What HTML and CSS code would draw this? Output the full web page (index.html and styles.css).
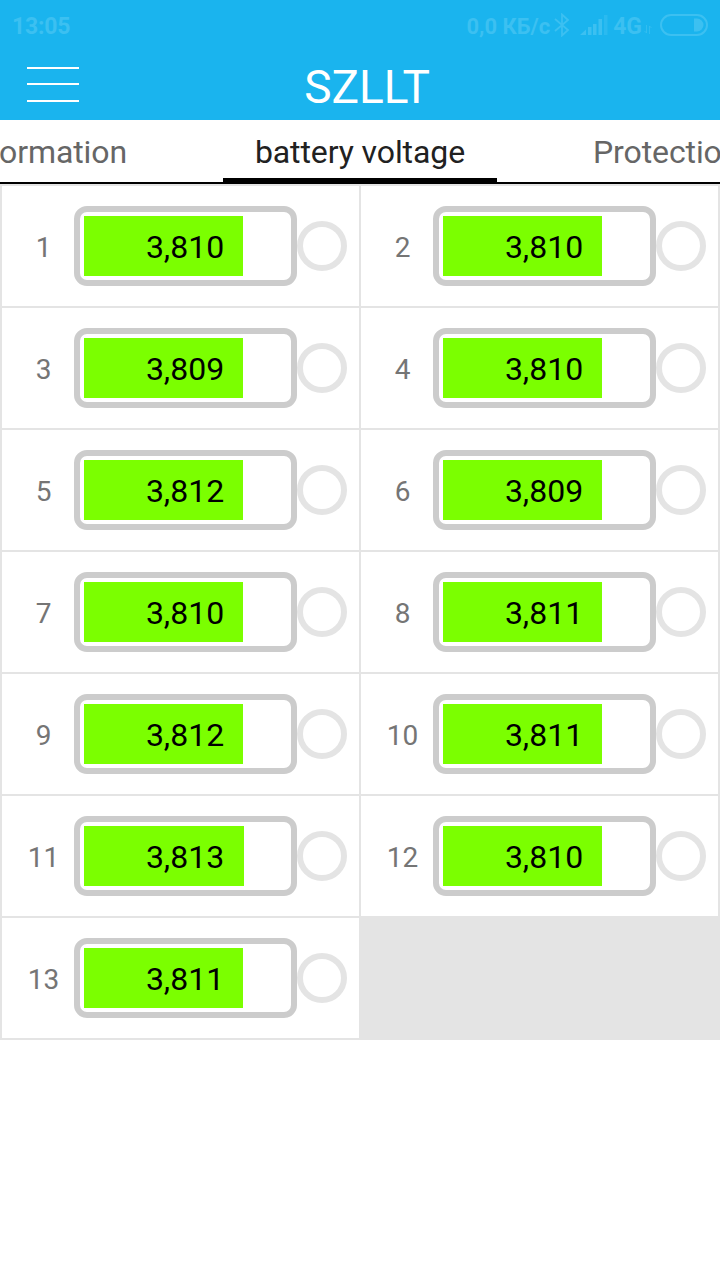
FILE: index.html
```html
<!DOCTYPE html>
<html lang="en">
<head>
    <meta charset="UTF-8">
    <meta name="viewport" content="width=device-width, initial-scale=1.0">
    <title>SZLLT</title>
    <link rel="stylesheet" href="styles.css">
</head>
<body>
    <header class="header">
        <div class="status-bar">
            <span class="clock">13:05</span>
            <span class="speed">0,0 КБ/с</span>
            <svg class="bluetooth" width="16" height="24" viewBox="0 0 16 24">
                <path d="M1 6 L14 17 L8 22.500 V1.500 L14 7 L1 18" fill="none" stroke="currentColor" stroke-width="1.800"/>
            </svg>
            <svg class="signal" width="28" height="20" viewBox="0 0 28 20">
                <path d="M0 20 L6 14.500 V20Z M8 12h3.500v8H8z M13 9h3.500v11H13z M18.500 4h3.500v16h-3.500z" fill="currentColor"/>
                <path d="M24 0h3.500v20H24z" fill="currentColor" opacity="0.5"/>
            </svg>
            <span class="network">4G</span>
            <svg class="arrows" width="8" height="9" viewBox="0 0 8 9">
                <path d="M2.500 0V8L0.500 6 M5.500 9V1L7.500 3" fill="none" stroke="currentColor" opacity="0.7"/>
            </svg>
            <svg class="battery-icon" width="48" height="22" viewBox="0 0 48 22">
                <rect x="1" y="1" width="46" height="20" rx="10" fill="none" stroke="currentColor" stroke-width="2"/>
                <path d="M34 4.500h3a6.500 6.500 0 0 1 0 13h-3z" fill="currentColor"/>
            </svg>
        </div>
        <div class="title-bar">
            <button class="menu-button" aria-label="Menu">
                <svg width="52" height="36" viewBox="0 0 52 36">
                    <path d="M0 1h52v2H0z M0 17h52v2H0z M0 34h52v2H0z" fill="#fff"/>
                </svg>
            </button>
            <h1>SZLLT</h1>
        </div>
    </header>

    <nav class="tabs">
        <a class="tab tab-left">Information</a>
        <a class="tab active">battery voltage</a>
        <a class="tab tab-right">Protection</a>
    </nav>

    <main class="cells" id="cells"></main>

    <script>
        const voltages = [
            3.810, 3.810, 3.809, 3.810, 3.812, 3.809, 3.810,
            3.811, 3.812, 3.811, 3.813, 3.810, 3.811
        ];

        const emptyVoltage = 3;
        const fullVoltage = 4.034;

        function renderCells() {
            const container = document.getElementById('cells');
            voltages.forEach((voltage, index) => {
                const width = Math.round((voltage - emptyVoltage) / (fullVoltage - emptyVoltage) * 203);
                const cell = document.createElement('div');
                cell.className = 'cell';
                cell.innerHTML = `
                    <span class="number">${index + 1}</span>
                    <div class="battery">
                        <div class="level" style="width: ${width}px"></div>
                        <span class="value">${voltage.toFixed(3).replace('.', ',')}</span>
                    </div>
                    <span class="balance"></span>
                `;
                container.appendChild(cell);
            });
        }

        renderCells();
    </script>
</body>
</html>
```
FILE: styles.css
```css
* {
    box-sizing: border-box;
}
body {
    font-family: Roboto, sans-serif;
    background-color: #fff;
    margin: 0;
    overflow-x: hidden;
}

/* Header */
.header {
    background-color: #1ab4ee;
    height: 120px;
}
.status-bar {
    display: flex;
    align-items: center;
    height: 50px;
    padding: 0 12px 0 12px;
    color: #3cc0f1;
    font-size: 23px;
    font-weight: 700;
    white-space: nowrap;
}
.clock {
    margin-right: auto;
    padding-top: 2px;
    letter-spacing: -0.2px;
}
.speed,
.network {
    padding-top: 2px;
}
.speed {
    font-size: 22px;
}
.bluetooth {
    margin: 0 10px 0 4px;
}
.signal {
    margin: 0 5px 0 0;
}
.arrows {
    margin: 9px 8px 0 2px;
}
.title-bar {
    display: flex;
    height: 70px;
    padding-left: 27px;
}
.menu-button {
    width: 52px;
    height: 36px;
    margin: 16px 0 0;
    padding: 0;
    border: none;
    background: none;
}
.menu-button svg {
    display: block;
}
.title-bar h1 {
    flex: 1;
    margin: 0;
    padding-right: 65px;
    color: #fff;
    font-size: 46px;
    font-weight: 400;
    line-height: 74px;
    text-align: center;
}

/* Tabs */
.tabs {
    display: grid;
    grid-template-columns: 223px 274px 223px;
    height: 64px;
    overflow: hidden;
    border-bottom: 2px solid #000;
}
.tab {
    display: flex;
    height: 62px;
    color: #666;
    font-size: 32px;
    line-height: 64px;
    letter-spacing: -0.1px;
    white-space: nowrap;
}
.tab-left {
    justify-content: flex-end;
    padding-right: 96px;
}
.tab-right {
    padding-left: 96px;
}
.tab.active {
    justify-content: center;
    border-bottom: 4px solid #000;
    color: #212121;
}

/* Battery cells */
.cells {
    display: grid;
    grid-template-columns: 1fr 1fr;
    gap: 2px;
    padding: 2px;
    background-color: #e4e4e4;
}
.cell {
    display: flex;
    align-items: center;
    height: 120px;
    padding-left: 12px;
    background-color: #fff;
}
.number {
    width: 60px;
    padding: 2px 1px 0 0;
    color: #757575;
    font-size: 28px;
    text-align: center;
}
.battery {
    display: grid;
    grid-template-rows: 60px;
    width: 223px;
    height: 80px;
    padding: 4px;
    border: 6px solid #ccc;
    border-radius: 13px;
}
.level,
.value {
    grid-area: 1 / 1;
}
.level {
    background-color: #7bff00;
}
.value {
    padding-right: 1px;
    color: #000;
    font-size: 32px;
    line-height: 62px;
    text-align: center;
}
.balance {
    width: 50px;
    height: 50px;
    border: 6px solid #e4e4e4;
    border-radius: 50%;
}
```
